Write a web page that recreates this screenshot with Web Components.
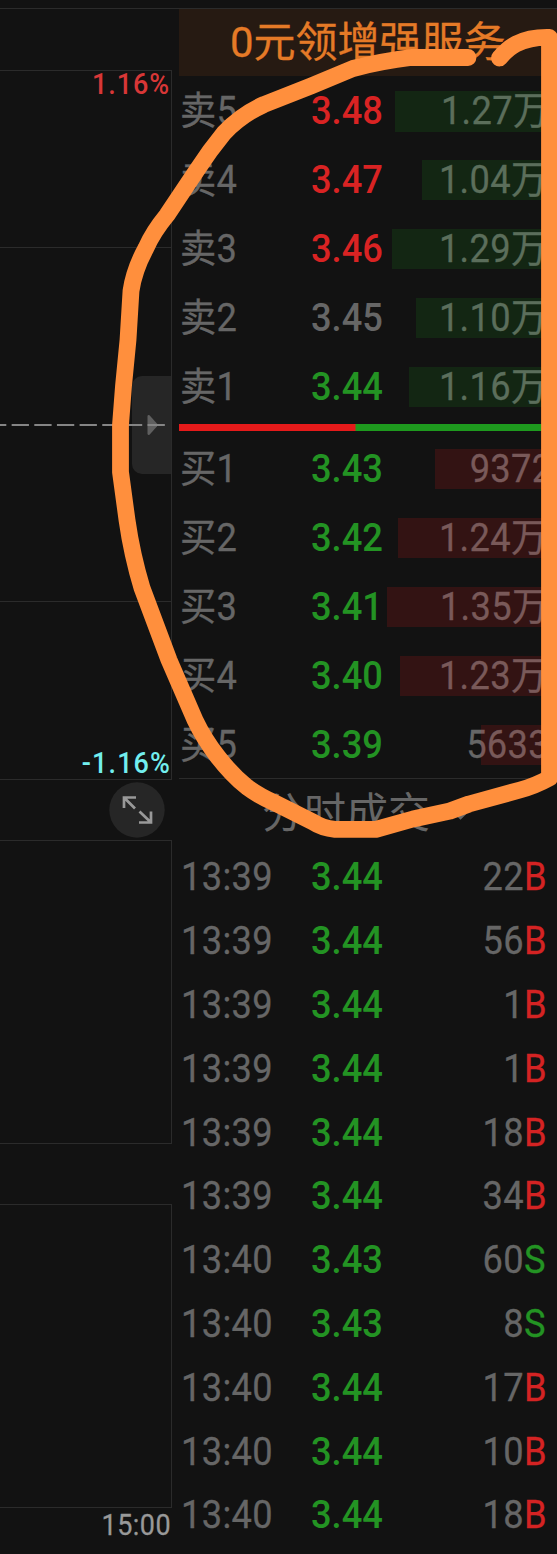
<!DOCTYPE html>
<html lang="zh-CN">
<head>
<meta charset="UTF-8">
<title>分时成交</title>
<style>
  body {
    margin: 0;
    background: #121212;
    color: #666;
    font-family: Roboto, "Noto Sans CJK SC", sans-serif;
    overflow: hidden;
  }
</style>
</head>
<body>
<stock-page></stock-page>
<script>
/* Condensed digits, anchored left or right */
class NarrowText extends HTMLElement {
  constructor() {
    super();
    this.attachShadow({ mode: "open" });
  }

  static get styles() {
    return /* css */`
      :host {
        display: block;
        white-space: nowrap;
        font-size: 39px;
        letter-spacing: 0.35px;
        transform: scaleX(0.93);
        transform-origin: 0 50%;
        -webkit-text-stroke: 0.3px currentColor;
      }

      :host([end]) {
        text-align: right;
        transform-origin: 100% 50%;
      }
    `;
  }

  connectedCallback() {
    this.shadowRoot.innerHTML = /* html */`<style>${NarrowText.styles}</style><slot></slot>`;
  }
}

customElements.define("narrow-text", NarrowText);

class DepthRow extends HTMLElement {
  constructor() {
    super();
    this.attachShadow({ mode: "open" });
  }

  static get styles() {
    return /* css */`
      :host {
        display: grid;
        grid-template-columns: 131.5px 76px 1fr;
        height: 68.9px;
        line-height: 70.5px;
        align-items: center;
      }

      .label { margin-left: 1px; }

      .price {
        font-weight: 500;
        letter-spacing: 0;
        color: var(--price);
        -webkit-text-stroke: 0;
      }

      .volume {
        display: grid;
        align-items: center;
      }

      .volume > * { grid-area: 1 / 1; }

      .bar {
        justify-self: end;
        height: 40.5px;
        margin-right: 8px;
        z-index: 1;
      }
    `;
  }

  connectedCallback() {
    const { label, price, color, volume, bar, side, right } = this.dataset;
    const tint = side === "sell" ? "rgba(26, 160, 26, 0.14)" : "rgba(225, 26, 26, 0.16)";
    this.shadowRoot.innerHTML = /* html */`
    <style>${DepthRow.styles}</style>
    <narrow-text class="label">${label}</narrow-text>
    <narrow-text class="price" style="--price: ${color}">${price}</narrow-text>
    <div class="volume">
      <narrow-text end style="margin-right: ${right}px">${volume}</narrow-text>
      <div class="bar" style="width: ${bar}px; background: ${tint}"></div>
    </div>`;
  }
}

customElements.define("depth-row", DepthRow);

class TradeRow extends HTMLElement {
  constructor() {
    super();
    this.attachShadow({ mode: "open" });
  }

  static get styles() {
    return /* css */`
      :host {
        display: grid;
        grid-template-columns: 131.5px 76px 137px 1fr;
        height: 63.8px;
        line-height: 63.8px;
      }

      .time { margin-left: 1.5px; }

      .price {
        font-weight: 500;
        letter-spacing: 0;
        color: var(--price);
        -webkit-text-stroke: 0;
      }

      .B { color: #d42323; }
      .S { color: #239323; }
    `;
  }

  connectedCallback() {
    const { time, price, count, side } = this.dataset;
    this.shadowRoot.innerHTML = /* html */`
    <style>${TradeRow.styles}</style>
    <narrow-text class="time">${time}</narrow-text>
    <narrow-text class="price" style="--price: #239323">${price}</narrow-text>
    <narrow-text end>${count}</narrow-text>
    <narrow-text class="${side}">${side}</narrow-text>`;
  }
}

customElements.define("trade-row", TradeRow);

class ChartPanel extends HTMLElement {
  constructor() {
    super();
    this.attachShadow({ mode: "open" });
  }

  static get styles() {
    return /* css */`
      :host {
        display: flex;
        flex-direction: column;
        padding-top: 61px;
      }

      .box {
        box-sizing: border-box;
        border: 1px solid #2b2b2b;
        border-left: 0;
      }

      .main {
        height: 710px;
        display: grid;
        grid-template-rows: 177px 354px 1fr;
        position: relative;
      }

      .main > div { border-bottom: 1px solid #2b2b2b; }
      .main > div:last-of-type { border: 0; display: flex; flex-direction: column; justify-content: flex-end; }
      .sub { height: 304px; }

      narrow-text {
        font-size: 29px;
        line-height: 30px;
        font-weight: 500;
        letter-spacing: 1px;
        -webkit-text-stroke: 0;
      }

      .up { color: #d83737; margin: -2px 1px 0 0; }
      .down { color: #72eeee; letter-spacing: 1.2px; margin-bottom: 1px; }

      .middle {
        position: absolute;
        left: 0;
        top: 305px;
      }

      .expand {
        height: 60px;
        display: flex;
        justify-content: flex-end;
        padding-right: 7px;
      }

      .expand svg { margin-top: 2px; flex: none; }
      .gap { height: 60px; }
      .end {
        color: #999;
        font-weight: 400;
        letter-spacing: 0.5px;
        margin: 2px 1px 0 0;
        -webkit-text-stroke: 0.3px #999;
      }
    `;
  }

  connectedCallback() {
    this.shadowRoot.innerHTML = /* html */`
    <style>${ChartPanel.styles}</style>
    <div class="box main">
      <div><narrow-text end class="up">1.16%</narrow-text></div>
      <div></div>
      <div><narrow-text end class="down">-1.16%</narrow-text></div>
      <svg class="middle" width="171" height="98" viewBox="0 0 171 98">
        <path d="M171 0H142a10 10 0 0 0-10 10v78a10 10 0 0 0 10 10h29z" fill="#262626"/>
        <path d="M147.500 40.500q0-2 2-1.200l7.400 8.200q1 1.500 0 3l-7.400 8.200q-2 .8-2-1.200z" fill="#5f5f5f"/>
        <path d="M-11 49H165" stroke="#858585" stroke-width="2" stroke-dasharray="17.300 5.350"/>
      </svg>
    </div>
    <div class="expand">
      <svg width="56" height="56" viewBox="0 0 56 56">
        <circle cx="28" cy="28" r="27.700" fill="#262626"/>
        <path d="M15 26V15.500H27M15.500 16l10.500 10.500M42 29.500V40.500H30M41.500 40L30.500 29.500" fill="none" stroke="#999" stroke-width="2.700"/>
      </svg>
    </div>
    <div class="box sub"></div>
    <div class="gap"></div>
    <div class="box sub"></div>
    <narrow-text end class="end">15:00</narrow-text>`;
  }
}

customElements.define("chart-panel", ChartPanel);

class QuotePanel extends HTMLElement {
  constructor() {
    super();
    this.attachShadow({ mode: "open" });
  }

  static get styles() {
    return /* css */`
      :host { display: block; }

      .banner {
        height: 67px;
        line-height: 68px;
        background: #261a12;
        color: #e57a27;
      }

      .banner narrow-text {
        font-size: 42px;
        padding-left: 51px;
        transform: none;
        letter-spacing: 0;
      }

      .ratio {
        height: 7px;
        margin: 3.5px 0 3px;
        background: linear-gradient(to right, #e51a1a 0 176px, #1e9a1e 177px);
      }

      .title {
        display: flex;
        align-items: center;
        box-sizing: border-box;
        height: 68px;
        border-top: 1px solid #2b2b2b;
        font-size: 42px;
        line-height: 62px;
        padding: 2px 0 0 83px;
        gap: 20px;
      }

      .title svg { margin-top: 2px; }
    `;
  }

  connectedCallback() {
    const red = "#d92323";
    const green = "#239323";
    const sells = [
      ["卖5", "3.48", red, "1.27万", 154, 8],
      ["卖4", "3.47", red, "1.04万", 127, 10],
      ["卖3", "3.46", red, "1.29万", 157, 10],
      ["卖2", "3.45", "#666", "1.10万", 133, 10],
      ["卖1", "3.44", green, "1.16万", 140, 10],
    ];
    const buys = [
      ["买1", "3.43", green, "9372", 114, 5],
      ["买2", "3.42", green, "1.24万", 151, 10],
      ["买3", "3.41", green, "1.35万", 163.5, 10],
      ["买4", "3.40", green, "1.23万", 149.5, 10],
      ["买5", "3.39", green, "5633", 68, 8.5],
    ];
    const trades = [
      ["13:39", "3.44", 22, "B"],
      ["13:39", "3.44", 56, "B"],
      ["13:39", "3.44", 1, "B"],
      ["13:39", "3.44", 1, "B"],
      ["13:39", "3.44", 18, "B"],
      ["13:39", "3.44", 34, "B"],
      ["13:40", "3.43", 60, "S"],
      ["13:40", "3.43", 8, "S"],
      ["13:40", "3.44", 17, "B"],
      ["13:40", "3.44", 10, "B"],
      ["13:40", "3.44", 18, "B"],
    ];
    const depth = (rows, side) => rows.map(([label, price, color, volume, bar, right]) =>
      `<depth-row data-side="${side}" data-label="${label}" data-price="${price}" data-color="${color}"
        data-volume="${volume}" data-bar="${bar}" data-right="${right}"></depth-row>`).join("");

    this.shadowRoot.innerHTML = /* html */`
    <style>${QuotePanel.styles}</style>
    <div class="banner"><narrow-text>0元领增强服务</narrow-text></div>
    ${depth(sells, "sell")}
    <div class="ratio"></div>
    ${depth(buys, "buy")}
    <div class="title">
      <span>分时成交</span>
      <svg width="22" height="12" viewBox="0 0 22 12"><path d="M5 3.500l5.500 5.500 5.500-5.500" fill="none" stroke="#666" stroke-width="2.500"/></svg>
    </div>
    ${trades.map(([time, price, count, side]) =>
      `<trade-row data-time="${time}" data-price="${price}" data-count="${count}" data-side="${side}"></trade-row>`).join("")}`;
  }
}

customElements.define("quote-panel", QuotePanel);

/* Freehand marker line lying over the whole page */
class MarkerStroke extends HTMLElement {
  constructor() {
    super();
    this.attachShadow({ mode: "open" });
  }

  connectedCallback() {
    this.shadowRoot.innerHTML = /* html */`
    <style>
      :host {
        position: absolute;
        inset: 0;
        z-index: 2;
        pointer-events: none;
      }
    </style>
    <svg width="557" height="1554" viewBox="0 0 557 1554">
      <path fill="none" stroke="#ff8f3d" stroke-width="16.800" stroke-linecap="round" stroke-linejoin="round"
        d="M468 57.500H411Q382 61 353 68.500L311 86 264 104.500Q241 115 224 133 210 150 197 170L167 215Q153 232 146 248
           134 270 131 291L128 340 123.500 386 120.500 425V472L127 520Q132 555 142 588L169 660 195 720Q204 739 218 757
           232 775 247 787 259 796 275 803L313 822Q322 828 335 829.300H376L413 819 450 811 469 804 520 790
           Q535 786 549.500 778V37.500Q530 37 516 44 508 48 499.500 58"/>
    </svg>`;
  }
}

customElements.define("marker-stroke", MarkerStroke);

class StockPage extends HTMLElement {
  constructor() {
    super();
    this.attachShadow({ mode: "open" });
  }

  static get styles() {
    return /* css */`
      :host {
        display: grid;
        grid-template-columns: 172px 378px;
        grid-template-rows: 1px 1fr;
        column-gap: 7px;
        align-items: start;
        box-sizing: border-box;
        width: 557px;
        height: 1554px;
        padding-top: 8px;
        position: relative;
        overflow: hidden;
      }

      .line {
        grid-column: 1 / -1;
        height: 1px;
        background: #2b2b2b;
      }
    `;
  }

  connectedCallback() {
    this.shadowRoot.innerHTML = /* html */`
    <style>${StockPage.styles}</style>
    <div class="line"></div>
    <chart-panel></chart-panel>
    <quote-panel></quote-panel>
    <marker-stroke></marker-stroke>`;
  }
}

customElements.define("stock-page", StockPage);
</script>
</body>
</html>
